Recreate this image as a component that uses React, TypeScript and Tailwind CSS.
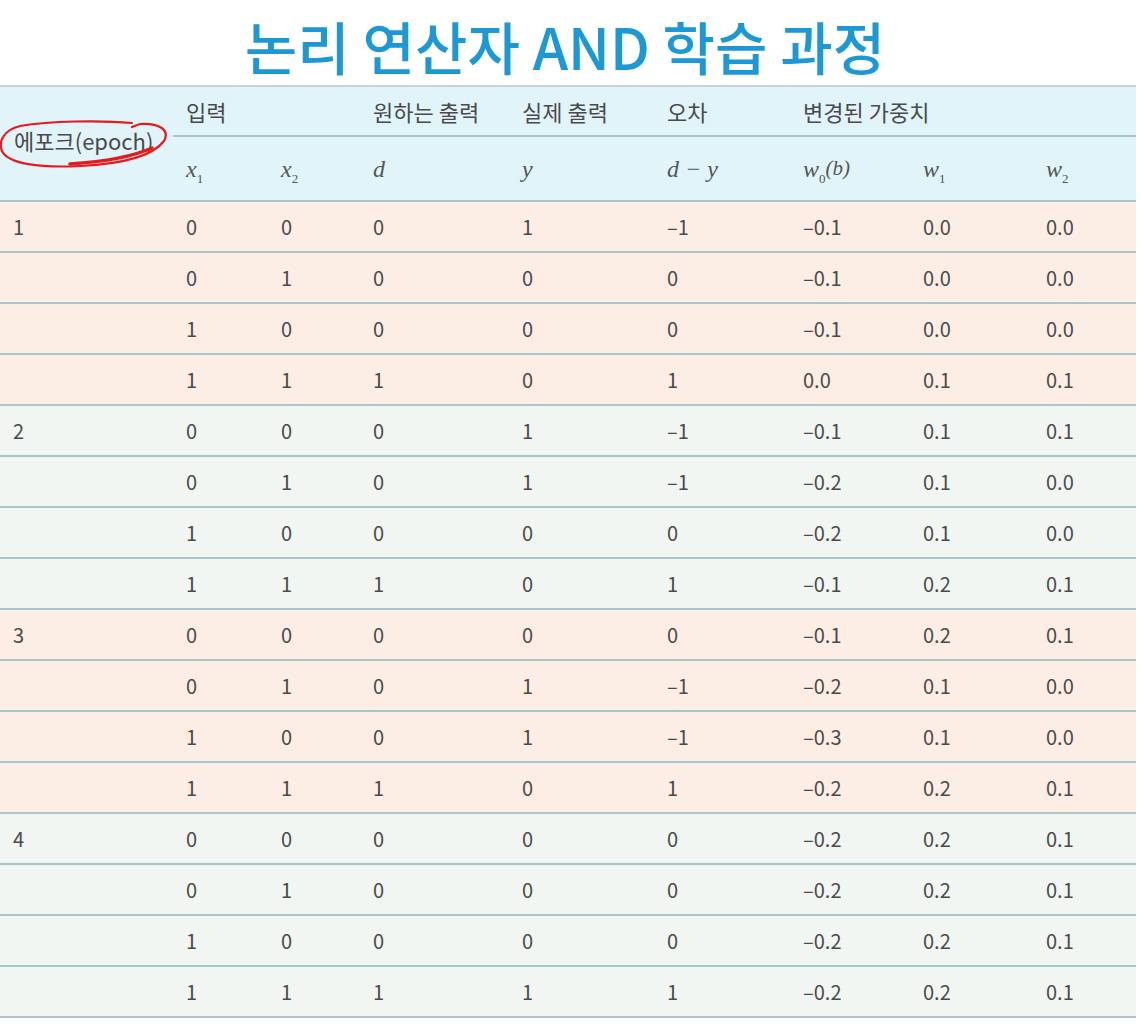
import React from 'react';

const cols = 'grid grid-cols-[173px_95px_92px_149px_145px_136px_120px_123px_103px]';

const epochs: string[][][] = [
  [
    ['0', '0', '0', '1', '–1', '–0.1', '0.0', '0.0'],
    ['0', '1', '0', '0', '0', '–0.1', '0.0', '0.0'],
    ['1', '0', '0', '0', '0', '–0.1', '0.0', '0.0'],
    ['1', '1', '1', '0', '1', '0.0', '0.1', '0.1'],
  ],
  [
    ['0', '0', '0', '1', '–1', '–0.1', '0.1', '0.1'],
    ['0', '1', '0', '1', '–1', '–0.2', '0.1', '0.0'],
    ['1', '0', '0', '0', '0', '–0.2', '0.1', '0.0'],
    ['1', '1', '1', '0', '1', '–0.1', '0.2', '0.1'],
  ],
  [
    ['0', '0', '0', '0', '0', '–0.1', '0.2', '0.1'],
    ['0', '1', '0', '1', '–1', '–0.2', '0.1', '0.0'],
    ['1', '0', '0', '1', '–1', '–0.3', '0.1', '0.0'],
    ['1', '1', '1', '0', '1', '–0.2', '0.2', '0.1'],
  ],
  [
    ['0', '0', '0', '0', '0', '–0.2', '0.2', '0.1'],
    ['0', '1', '0', '0', '0', '–0.2', '0.2', '0.1'],
    ['1', '0', '0', '0', '0', '–0.2', '0.2', '0.1'],
    ['1', '1', '1', '1', '1', '–0.2', '0.2', '0.1'],
  ],
];

// math-style italic symbol with optional subscript
const M = ({ v, sub }: { v: string; sub?: string }) => (
  <span className="font-['Liberation_Serif','DejaVu_Serif',serif] italic text-[24px] text-[#555]">
    {v}
    {sub && <sub className="not-italic text-[13px] align-[-3px]">{sub}</sub>}
  </span>
);

export default function App() {
  return (
    <div className="w-[1143px] h-[1027px] bg-white overflow-hidden font-['Noto_Sans_CJK_KR','Noto_Sans',sans-serif] text-[#4a4a4a]">
      <div className="w-[1136px] h-[85px] flex items-center justify-center pt-[6px]">
        <h1 className="text-[57px] font-medium leading-none text-[#1c98d5] ml-[-6px]">
          논리 연산자 AND 학습 과정
        </h1>
      </div>

      <div className="w-[1136px] relative">
        {/* header */}
        <div className={`${cols} grid-rows-[50px_63px] bg-[#e1f4fa] border-t-2 border-b-2 border-t-[#c4d6d8] border-b-[#a9c6cb] text-[22px]`}>
          <div className="row-span-2 flex items-center pl-[14px] pb-[6px]">에포크(epoch)</div>
          <div className="col-span-2 flex items-center pl-[13px] border-b-2 border-[#a9c6cb]">입력</div>
          <div className="flex items-center pl-[13px] border-b-2 border-[#a9c6cb]">원하는 출력</div>
          <div className="flex items-center pl-[13px] border-b-2 border-[#a9c6cb]">실제 출력</div>
          <div className="flex items-center pl-[13px] border-b-2 border-[#a9c6cb]">오차</div>
          <div className="col-span-3 flex items-center pl-[13px] border-b-2 border-[#a9c6cb]">변경된 가중치</div>
          <div className="flex items-center pl-[13px]"><M v="x" sub="1" /></div>
          <div className="flex items-center pl-[13px]"><M v="x" sub="2" /></div>
          <div className="flex items-center pl-[13px]"><M v="d" /></div>
          <div className="flex items-center pl-[13px]"><M v="y" /></div>
          <div className="flex items-center pl-[13px]"><M v="d − y" /></div>
          <div className="flex items-center pl-[13px]">
            <M v="w" sub="0" />
            <span className="font-['Liberation_Serif','DejaVu_Serif',serif] italic text-[21px] text-[#555]">(b)</span>
          </div>
          <div className="flex items-center pl-[13px]"><M v="w" sub="1" /></div>
          <div className="flex items-center pl-[13px]"><M v="w" sub="2" /></div>
        </div>

        {/* red hand-drawn circle */}
        <svg className="absolute left-0 top-[34px] w-[175px] h-[54px]" viewBox="0 0 175 54" fill="none">
          <path
            d="M132 4 C100 1 50 2 20 7 C4 11 -2 22 2 32 C8 45 40 49 80 47 C120 45 152 38 164 22 C170 11 160 4 140 5 L132 8"
            stroke="#e41a1c"
            strokeWidth="2.2"
            strokeLinecap="round"
          />
          <path d="M70 45 C100 43 132 38 152 29" stroke="#e41a1c" strokeWidth="3.5" strokeLinecap="round" />
        </svg>

        {/* body */}
        {epochs.map((rows, ei) =>
          rows.map((r, ri) => (
            <div
              key={`${ei}-${ri}`}
              className={`${cols} h-[51px] border-b-2 border-[#a9c6cb] text-[20px] ${ei % 2 === 0 ? 'bg-[#fdeee5]' : 'bg-[#f1f6f3]'}`}
            >
              <div className="flex items-center pl-[13px]">{ri === 0 ? ei + 1 : ''}</div>
              {r.map((c, ci) => (
                <div key={ci} className="flex items-center pl-[13px]">{c}</div>
              ))}
            </div>
          ))
        )}
      </div>
    </div>
  );
}
